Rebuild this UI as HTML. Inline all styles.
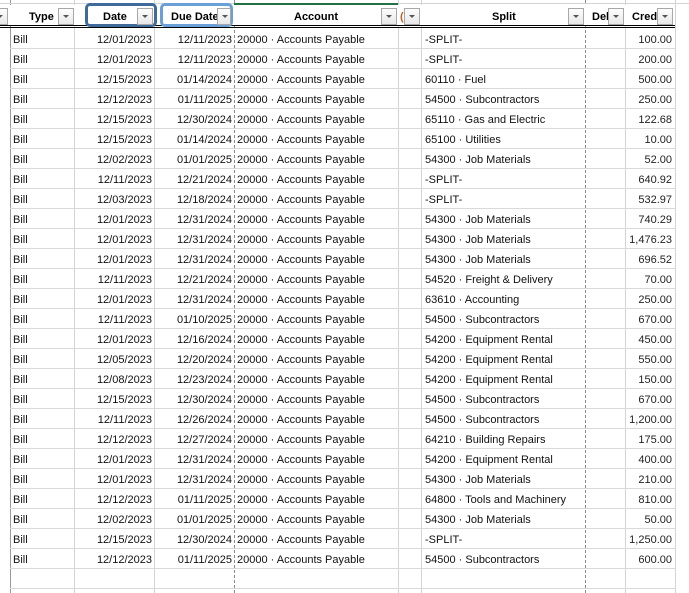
<!DOCTYPE html>
<html><head><meta charset="utf-8"><style>
body{margin:0;width:689px;height:593px;overflow:hidden;background:#fff;font-family:"Liberation Sans",Arial,sans-serif;font-size:11px;color:#111;position:relative}
.v{position:absolute;top:0;height:593px;width:0;border-left:1px solid #d4d4d4}
.vd{position:absolute;top:0;height:593px;width:0;border-left:1px dashed #8a8a8a}
.h{position:absolute;left:10px;width:665px;height:0;border-top:1px solid #d9d9d9}
.btn{position:absolute;top:8px;width:14px;height:15px;border:1px solid #a8a8a8;background:linear-gradient(#fdfdfd,#e8e8e8);box-sizing:content-box}
.btn:after{content:"";position:absolute;left:4px;top:6px;border-left:3px solid transparent;border-right:3px solid transparent;border-top:3px solid #555}
.hd{position:absolute;top:11px;font-weight:bold;font-size:11px;color:#000}
.c{position:absolute;white-space:nowrap}
.r{text-align:right}
</style></head><body>
<div class="v" style="left:10px;border-color:#9a9a9a"></div>
<div class="v" style="left:74px"></div>
<div class="v" style="left:154px"></div>
<div class="vd" style="left:234px"></div>
<div class="v" style="left:398px"></div>
<div class="v" style="left:421px"></div>
<div class="vd" style="left:585px"></div>
<div class="v" style="left:625px"></div>
<div class="v" style="left:675px"></div>
<div style="position:absolute;left:0;top:0;width:689px;height:3px;border-bottom:1px solid #d4d4d4"></div>
<div style="position:absolute;left:234px;top:3px;width:164px;height:2px;background:#217346"></div>
<div style="position:absolute;left:0;top:5px;width:675px;height:20px;background:#fff"></div>
<div style="position:absolute;left:0;top:25px;width:675px;height:1px;background:#000"></div>
<div style="position:absolute;left:0;top:27px;width:675px;height:1px;background:#000"></div>
<div class="btn" style="left:-8px"></div>
<div class="hd" style="left:29px">Type</div>
<div class="btn" style="left:58px"></div>
<div style="position:absolute;left:85px;top:3px;width:66px;height:18px;border:3px solid #3f6a99;border-radius:5px"></div>
<div class="hd" style="left:103px">Date</div>
<div class="btn" style="left:137px"></div>
<div style="position:absolute;left:160px;top:3px;width:67px;height:18px;border:3px solid #6a9fd8;border-radius:5px"></div>
<div class="hd" style="left:171px">Due Date</div>
<div class="btn" style="left:217px;width:12px"></div>
<div class="hd" style="left:294px">Account</div>
<div class="btn" style="left:381px"></div>
<div class="hd" style="left:400px;color:#c0601a">(</div>
<div class="btn" style="left:404px"></div>
<div class="hd" style="left:492px">Split</div>
<div class="btn" style="left:568px"></div>
<div class="hd" style="left:592px">Del</div>
<div class="btn" style="left:608px"></div>
<div class="hd" style="left:632px">Cred</div>
<div class="btn" style="left:657px"></div>
<div id="rows"></div>
<script>
var d=[["12/01/2023","12/11/2023","-SPLIT-","100.00"],["12/01/2023","12/11/2023","-SPLIT-","200.00"],["12/15/2023","01/14/2024","60110 · Fuel","500.00"],["12/12/2023","01/11/2025","54500 · Subcontractors","250.00"],["12/15/2023","12/30/2024","65110 · Gas and Electric","122.68"],["12/15/2023","01/14/2024","65100 · Utilities","10.00"],["12/02/2023","01/01/2025","54300 · Job Materials","52.00"],["12/11/2023","12/21/2024","-SPLIT-","640.92"],["12/03/2023","12/18/2024","-SPLIT-","532.97"],["12/01/2023","12/31/2024","54300 · Job Materials","740.29"],["12/01/2023","12/31/2024","54300 · Job Materials","1,476.23"],["12/01/2023","12/31/2024","54300 · Job Materials","696.52"],["12/11/2023","12/21/2024","54520 · Freight & Delivery","70.00"],["12/01/2023","12/31/2024","63610 · Accounting","250.00"],["12/11/2023","01/10/2025","54500 · Subcontractors","670.00"],["12/01/2023","12/16/2024","54200 · Equipment Rental","450.00"],["12/05/2023","12/20/2024","54200 · Equipment Rental","550.00"],["12/08/2023","12/23/2024","54200 · Equipment Rental","150.00"],["12/15/2023","12/30/2024","54500 · Subcontractors","670.00"],["12/11/2023","12/26/2024","54500 · Subcontractors","1,200.00"],["12/12/2023","12/27/2024","64210 · Building Repairs","175.00"],["12/01/2023","12/31/2024","54200 · Equipment Rental","400.00"],["12/01/2023","12/31/2024","54300 · Job Materials","210.00"],["12/12/2023","01/11/2025","64800 · Tools and Machinery","810.00"],["12/02/2023","01/01/2025","54300 · Job Materials","50.00"],["12/15/2023","12/30/2024","-SPLIT-","1,250.00"],["12/12/2023","01/11/2025","54500 · Subcontractors","600.00"]];
var h="";
for(var i=0;i<d.length;i++){var y=34+i*20;
h+='<div class="c" style="left:13px;top:'+y+'px">Bill</div>';
h+='<div class="c r" style="left:80px;width:72px;top:'+y+'px">'+d[i][0]+'</div>';
h+='<div class="c r" style="left:160px;width:72px;top:'+y+'px">'+d[i][1]+'</div>';
h+='<div class="c" style="left:237px;top:'+y+'px">20000 · Accounts Payable</div>';
h+='<div class="c" style="left:425px;top:'+y+'px">'+d[i][2]+'</div>';
h+='<div class="c r" style="left:600px;width:72px;top:'+y+'px;color:#222">'+d[i][3]+'</div>';
h+='<div class="h" style="top:'+(48+i*20)+'px"></div>';}
h+='<div class="h" style="top:588px"></div>';
document.getElementById("rows").innerHTML=h;
</script>
</body></html>
